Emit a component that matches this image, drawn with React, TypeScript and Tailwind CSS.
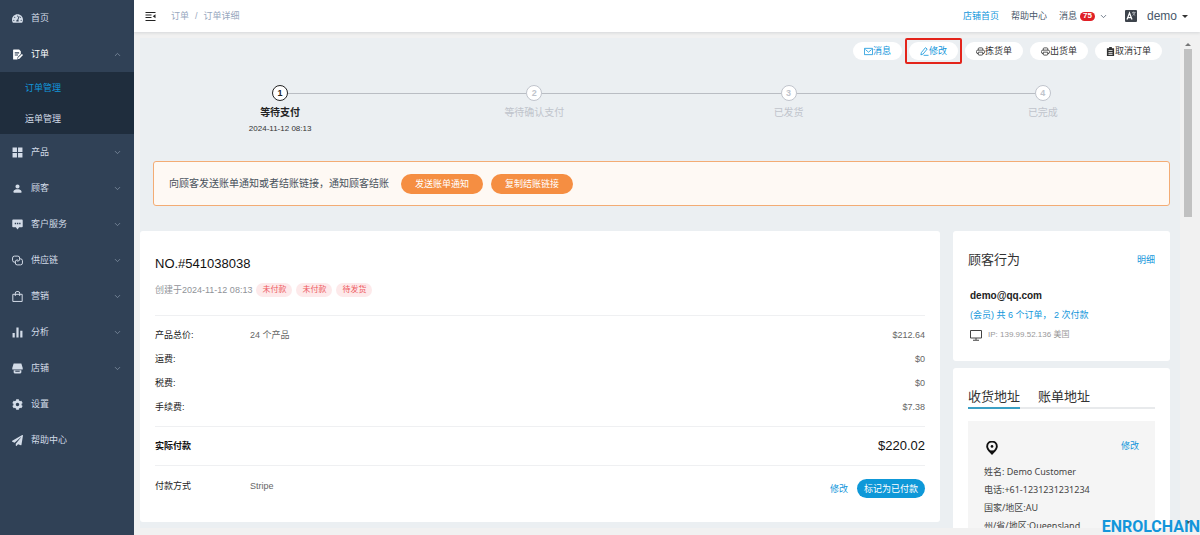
import React from "react";
import { BsPersonFill } from "react-icons/bs";
import { FaCog, FaPaperPlane, FaTachometerAlt } from "react-icons/fa";
import { ChevronDown, ChevronUp } from "lucide-react";
import clsx from "clsx";

type IconProps = { className?: string };

const OrderIcon = ({ className }: IconProps) => (
  <svg viewBox="0 0 20 20" className={className} fill="currentColor">
    <path d="M3 1h10l3 3v5l-6 6v4H3a1 1 0 0 1-1-1V2a1 1 0 0 1 1-1zm2 5v2h8V6H5zm0 4v2h6v-2H5z" fillRule="evenodd" />
    <path d="M18 9l2 2-7 7h-2v-2z" />
  </svg>
);

const GridIcon = ({ className }: IconProps) => (
  <svg viewBox="0 0 20 20" className={className} fill="currentColor">
    <path d="M1 1h8v8H1zM11 1h8v8h-8zM1 11h8v8H1zM11 11h8v8h-8z" />
  </svg>
);

const ChatIcon = ({ className }: IconProps) => (
  <svg viewBox="0 0 20 20" className={className} fill="currentColor">
    <path
      d="M2 1h16a1.500 1.500 0 0 1 1.500 1.500v11A1.500 1.500 0 0 1 18 15h-5l-3 4-3-4H2a1.500 1.500 0 0 1-1.500-1.500v-11A1.500 1.500 0 0 1 2 1zm3 6v2.500h2.500V7zm4 0v2.500h2.500V7zm4 0v2.500h2.500V7z"
      fillRule="evenodd"
    />
  </svg>
);

const ChainIcon = ({ className }: IconProps) => (
  <svg viewBox="0 0 20 20" className={className} fill="none" stroke="currentColor" strokeWidth="1.800">
    <path d="M7 13H4.500A3.500 3.500 0 0 1 1 9.500v-4A3.500 3.500 0 0 1 4.500 2h6A3.500 3.500 0 0 1 14 5.500v2a3.500 3.500 0 0 1-3.500 3.500H9" />
    <path d="M13 7h2.500A3.500 3.500 0 0 1 19 10.500v4a3.500 3.500 0 0 1-3.500 3.500h-6A3.500 3.500 0 0 1 6 14.500v-2A3.500 3.500 0 0 1 9.500 9H11" />
  </svg>
);

const BagIcon = ({ className }: IconProps) => (
  <svg viewBox="0 0 20 20" className={className} fill="none" stroke="currentColor" strokeWidth="1.800">
    <path d="M1.500 6h17v13h-17zM6 9V4a3 3 0 0 1 3-3h2a3 3 0 0 1 3 3v5" />
  </svg>
);

const StatsIcon = ({ className }: IconProps) => (
  <svg viewBox="0 0 20 20" className={className} fill="currentColor">
    <path d="M1 11h4v8H1zM8 1h4v18H8zM15 7h4v12h-4z" />
  </svg>
);

const ShopIcon = ({ className }: IconProps) => (
  <svg viewBox="0 0 20 20" className={className} fill="currentColor">
    <path d="M3 1h14l2.500 8v3h-19V9zM3 13h14v4a2 2 0 0 1-2 2H5a2 2 0 0 1-2-2zm3 1v2h8v-2z" fillRule="evenodd" />
  </svg>
);

const FoldIcon = ({ className }: IconProps) => (
  <svg viewBox="0 0 20 18" className={className} fill="currentColor">
    <path d="M0 0h20v2H0zM0 5h12v2H0zM0 10h12v2H0zM0 16h20v2H0zM20 4.500v8L14.500 8.500z" />
  </svg>
);

const MailIcon = ({ className }: IconProps) => (
  <svg viewBox="0 0 20 20" className={className} fill="none" stroke="currentColor" strokeWidth="1.800">
    <path d="M1 3h18v14H1zM3 5.500l7 6 7-6" />
  </svg>
);

const PenIcon = ({ className }: IconProps) => (
  <svg viewBox="0 0 20 20" className={className} fill="none" stroke="currentColor" strokeWidth="1.800">
    <path d="M12 1.500l4 3L7 15.500l-5 2 1-5zM8 18.500h11" />
  </svg>
);

const PrinterIcon = ({ className }: IconProps) => (
  <svg viewBox="0 0 20 20" className={className} fill="none" stroke="currentColor" strokeWidth="1.800">
    <path d="M5 7V4a2 2 0 0 1 2-2h6a2 2 0 0 1 2 2v3M5 15a4 4 0 0 1-4-4V10a3 3 0 0 1 3-3h12a3 3 0 0 1 3 3v1a4 4 0 0 1-4 4M5 11.500h10V16a2 2 0 0 1-2 2H7a2 2 0 0 1-2-2z" />
  </svg>
);

const ClipboardIcon = ({ className }: IconProps) => (
  <svg viewBox="0 0 20 20" className={className} fill="currentColor">
    <path d="M7 0h6v3h5v17H2V3h5zM5.500 7v2h9V7zm0 4v2h9v-2zm0 4v2h9v-2z" fillRule="evenodd" />
  </svg>
);

const MonitorIcon = ({ className }: IconProps) => (
  <svg viewBox="0 0 24 22" className={className} fill="none" stroke="currentColor" strokeWidth="2">
    <path d="M1 1h22v15H1zM12 16v4M6 20.500h12" />
  </svg>
);

const PinIcon = ({ className }: IconProps) => (
  <svg viewBox="0 0 22 26" className={className} fill="none" stroke="currentColor">
    <path d="M11 23.500C6 18 2 14.500 2 10a9 9 0 0 1 18 0c0 4.500-4 8-9 13.500z" strokeWidth="3.500" />
    <circle cx="11" cy="10" r="2.500" fill="currentColor" stroke="none" />
    <path d="M6 18l5 6 5-6z" fill="currentColor" />
  </svg>
);

const LanguageIcon = ({ className }: IconProps) => (
  <svg viewBox="0 0 24 24" className={className}>
    <rect width="24" height="24" rx="2" fill="#3d434b" />
    <path d="M4 19L9 6l5 13M6 15h6" fill="none" stroke="#fff" strokeWidth="2.500" />
    <path d="M14 5h7M17.500 3v2M20 5c-1 3-3 5-5 6M15.500 6c1 2 3 4 5 5" fill="none" stroke="#c9ccd0" strokeWidth="1.300" />
  </svg>
);

const menu = [
  { label: "首页", icon: FaTachometerAlt },
  { label: "订单", icon: OrderIcon, children: ["订单管理", "运单管理"], open: true },
  { label: "产品", icon: GridIcon, children: [] },
  { label: "顾客", icon: BsPersonFill, children: [] },
  { label: "客户服务", icon: ChatIcon, children: [] },
  { label: "供应链", icon: ChainIcon, children: [] },
  { label: "营销", icon: BagIcon, children: [] },
  { label: "分析", icon: StatsIcon, children: [] },
  { label: "店铺", icon: ShopIcon, children: [] },
  { label: "设置", icon: FaCog },
  { label: "帮助中心", icon: FaPaperPlane },
];

const actions = [
  { label: "消息", icon: MailIcon, primary: true },
  { label: "修改", icon: PenIcon, primary: true, marked: true },
  { label: "拣货单", icon: PrinterIcon },
  { label: "出货单", icon: PrinterIcon },
  { label: "取消订单", icon: ClipboardIcon },
];

const steps = [
  { label: "等待支付", time: "2024-11-12 08:13" },
  { label: "等待确认支付" },
  { label: "已发货" },
  { label: "已完成" },
];

const fees = [
  { label: "产品总价:", note: "24 个产品", amount: "$212.64" },
  { label: "运费:", note: "", amount: "$0" },
  { label: "税费:", note: "", amount: "$0" },
  { label: "手续费:", note: "", amount: "$7.38" },
];

const Sidebar = () => (
  <nav className="w-[134px] shrink-0 bg-[#304156] text-[#d3dce8]">
    <ul>
      {menu.map(({ label, icon: Icon, children, open }) => (
        <li key={label}>
          <button
            className={clsx("flex h-9 w-full items-center pr-3 pl-3 text-left", open && "text-white")}
            aria-expanded={children ? !!open : undefined}
          >
            <Icon className="mr-2 size-[11px]" />
            <span className="flex-1">{label}</span>
            {children &&
              (open ? (
                <ChevronUp className="size-[9px] text-[#8493a6]" strokeWidth={2} />
              ) : (
                <ChevronDown className="size-[9px] text-[#8493a6]" strokeWidth={2} />
              ))}
          </button>
          {open && (
            <ul className="bg-[#1f2d3d]">
              {children?.map((child, i) => (
                <li key={child}>
                  <a
                    href="#"
                    className={clsx("flex h-[31px] items-center pl-[25px]", i === 0 && "text-[#1296db]")}
                  >
                    {child}
                  </a>
                </li>
              ))}
            </ul>
          )}
        </li>
      ))}
    </ul>
  </nav>
);

const Header = () => (
  <header className="z-10 flex h-8 shrink-0 items-center bg-white pr-3 pl-[11px] shadow-[0_1px_3px_rgba(0,21,41,0.12)]">
    <button aria-label="收起菜单">
      <FoldIcon className="h-[9px] w-[11px] text-[#222]" />
    </button>
    <div className="ml-[15px] flex gap-[6px] text-[#97a8be]">
      <a href="#">订单</a>
      <span>/</span>
      <span>订单详细</span>
    </div>
    <div className="ml-auto flex items-center text-[#48576a]">
      <a href="#" className="text-[#1296db]">店铺首页</a>
      <a href="#" className="ml-3">帮助中心</a>
      <button className="ml-3 flex items-center">
        消息
        <span className="ml-[3px] flex h-[9px] w-[15px] items-center justify-center rounded-full bg-[#e01f26] text-[8px] font-bold text-white">
          75
        </span>
        <ChevronDown className="ml-1 size-[9px]" strokeWidth={2} />
      </button>
      <button className="ml-[17px]" aria-label="语言">
        <LanguageIcon className="size-3" />
      </button>
      <button className="ml-[10px] flex items-center text-[12px]">
        demo
        <svg viewBox="0 0 6 3" className="ml-[5px] h-[3px] w-[6px]" fill="#333">
          <path d="M0 0h6L3 3z" />
        </svg>
      </button>
    </div>
  </header>
);

const Steps = () => (
  <ol className="mt-[25px] grid grid-cols-4">
    {steps.map(({ label, time }, i) => (
      <li key={label} className={clsx("flex flex-col items-center", i === 0 ? "text-[#222]" : "text-[#c0c4cc]")}>
        <div className="flex w-full items-center">
          <span className={clsx("h-px flex-1", i > 0 && "bg-[#b9bdc3]")} />
          <span
            className={clsx(
              "flex size-4 items-center justify-center rounded-full border bg-white text-[9px] font-bold",
              i === 0 ? "border-[#222]" : "border-[#c0c4cc]"
            )}
          >
            {i + 1}
          </span>
          <span className={clsx("h-px flex-1", i < steps.length - 1 && "bg-[#b9bdc3]")} />
        </div>
        <span className={clsx("mt-[5px] text-[10px] leading-[14px]", i === 0 && "font-bold")}>{label}</span>
        {time && <span className="mt-[3px] text-[8px] leading-[12px] text-[#333]">{time}</span>}
      </li>
    ))}
  </ol>
);

const Notice = () => (
  <div className="mt-[26px] flex h-[45px] items-center rounded-[3px] border border-[#f3ac74] bg-[#fef9f4] pl-[15px]">
    <p className="text-[10px] text-[#48525c]">向顾客发送账单通知或者结账链接，通知顾客结账</p>
    <button className="ml-3 h-5 rounded-full bg-[#f58e42] px-[14px] text-white">发送账单通知</button>
    <button className="ml-2 h-5 rounded-full bg-[#f58e42] px-[14px] text-white">复制结账链接</button>
  </div>
);

const OrderCard = () => (
  <section className="flex-1 rounded-[3px] bg-white px-[15px] pt-6 pb-6">
    <h1 className="text-[13px] leading-[18px] text-[#111]">NO.#541038038</h1>
    <div className="mt-2 flex h-[18px] items-center gap-1 text-[#909399]">
      <span>创建于2024-11-12 08:13</span>
      {["未付款", "未付款", "待发货"].map((tag, i) => (
        <span
          key={i}
          className="flex h-[14px] items-center rounded-full bg-[#fde9ea] px-[6px] text-[8px] text-[#ee5a5f]"
        >
          {tag}
        </span>
      ))}
    </div>
    <div className="mt-4 border-y border-[#eff0f2] py-[7px]">
      <table className="w-full">
        <tbody>
          {fees.map(({ label, note, amount }) => (
            <tr key={label} className="h-6">
              <th scope="row" className="w-[95px] text-left font-normal text-[#222]">{label}</th>
              <td className="text-[#666]">{note}</td>
              <td className="text-right text-[#666]">{amount}</td>
            </tr>
          ))}
        </tbody>
      </table>
    </div>
    <div className="flex h-[39px] items-center justify-between border-b border-[#eff0f2] text-[#111]">
      <strong>实际付款</strong>
      <span className="text-[13px]">$220.02</span>
    </div>
    <div className="flex pt-[13px]">
      <span className="w-[95px] text-[#222]">付款方式</span>
      <span className="flex-1 text-[#666]">Stripe</span>
      <a href="#" className="mr-[9px] self-center text-[#1296db]">修改</a>
      <button className="h-[19px] rounded-full bg-[#0e98d8] px-[7px] text-white">标记为已付款</button>
    </div>
  </section>
);

const CustomerCard = () => (
  <section className="h-[130px] shrink-0 rounded-[3px] bg-white px-[15px] pt-5">
    <div className="flex items-center justify-between">
      <h2 className="text-[13px] leading-[18px] text-[#333]">顾客行为</h2>
      <a href="#" className="text-[#1296db]">明细</a>
    </div>
    <div className="mt-5 pl-[2px]">
      <p className="text-[10px] leading-[14px] font-bold text-[#222]">demo@qq.com</p>
      <p className="mt-[6px] leading-[12px] text-[#1296db]">(会员) 共 6 个订单， 2 次付款</p>
      <p className="mt-2 flex items-center text-[8px] leading-[12px] text-[#999]">
        <MonitorIcon className="mr-[6px] h-[11px] w-3 text-[#444]" />
        IP: 139.99.52.136 美国
      </p>
    </div>
  </section>
);

const AddressCard = () => (
  <section className="shrink-0 rounded-[3px] bg-white px-[15px] pt-[19px] pb-4">
    <div role="tablist" className="flex text-[13px] leading-[20px] text-[#333]">
      <button role="tab" aria-selected="true" className="border-b-2 border-[#3a9fc4]">收货地址</button>
      <button role="tab" aria-selected="false" className="flex-1 border-b-2 border-[#e8eaec] pl-[18px] text-left">
        账单地址
      </button>
    </div>
    <div className="mt-3 bg-[#f5f5f5] px-4 pt-5 pb-4">
      <div className="flex items-center justify-between">
        <PinIcon className="ml-[2px] h-[14px] w-3 text-[#111]" />
        <a href="#" className="-mt-1 text-[#1296db]">修改</a>
      </div>
      <div className="mt-2 font-['Noto_Sans','Noto_Sans_CJK_SC',sans-serif] leading-[18px] text-[#444]">
        <p>姓名: Demo Customer</p>
        <p>电话:+61-1231231231234</p>
        <p>国家/地区:AU</p>
        <p>州/省/地区:Queensland</p>
      </div>
    </div>
  </section>
);

const Scrollbar = () => (
  <div className="flex w-[8px] shrink-0 flex-col items-center pb-[4px]" aria-hidden="true">
    <svg viewBox="0 0 6 3" className="mt-[5px] h-[3px] w-[6px] shrink-0" fill="#777">
      <path d="M0 3h6L3 0z" />
    </svg>
    <div className="mt-[3px] h-[168px] w-full bg-[#c1c1c1]" />
    <svg viewBox="0 0 6 3" className="mt-auto h-[3px] w-[6px] shrink-0" fill="#555">
      <path d="M0 0h6L3 3z" />
    </svg>
  </div>
);

const App = () => {
  return (
    <div className="relative flex h-screen overflow-hidden bg-[#f1f1f1] font-['Liberation_Sans','Noto_Sans_CJK_SC',sans-serif] text-[9px] leading-[14px]">
      <Sidebar />
      <div className="flex min-w-0 flex-1 flex-col">
        <Header />
        <div className="flex min-h-0 flex-1 gap-1 pt-[6px] pr-2 pb-[7px] pl-[6px]">
          <main className="min-w-0 flex-1 overflow-hidden bg-[#ebeff2]">
            <div className="flex justify-end gap-[7px] pt-1 pr-[18px]">
              {actions.map(({ label, icon: Icon, primary, marked }) => (
                <div key={label} className="relative">
                  <button
                    className={clsx(
                      "flex h-[18px] items-center rounded-full bg-white px-[11px]",
                      primary ? "text-[#1296db]" : "text-[#333]"
                    )}
                  >
                    <Icon className="size-[9px]" />
                    {label}
                  </button>
                  {marked && (
                    <span className="pointer-events-none absolute -inset-1 rounded-[2px] border-2 border-[#e3241b]" />
                  )}
                </div>
              ))}
            </div>
            <div className="pr-[10px] pl-[13px]">
              <Steps />
              <Notice />
            </div>
            <div className="mt-[25px] flex items-start gap-[13px] pr-[10px]">
              <OrderCard />
              <div className="flex w-[217px] shrink-0 flex-col gap-[7px]">
                <CustomerCard />
                <AddressCard />
              </div>
            </div>
          </main>
          <Scrollbar />
        </div>
      </div>
      <span className="absolute right-0 bottom-0 z-20 font-[Roboto,sans-serif] text-[16px] leading-[16px] font-bold text-[#1296db]">
        ENROLCHAIN
      </span>
    </div>
  );
};

export default App;
